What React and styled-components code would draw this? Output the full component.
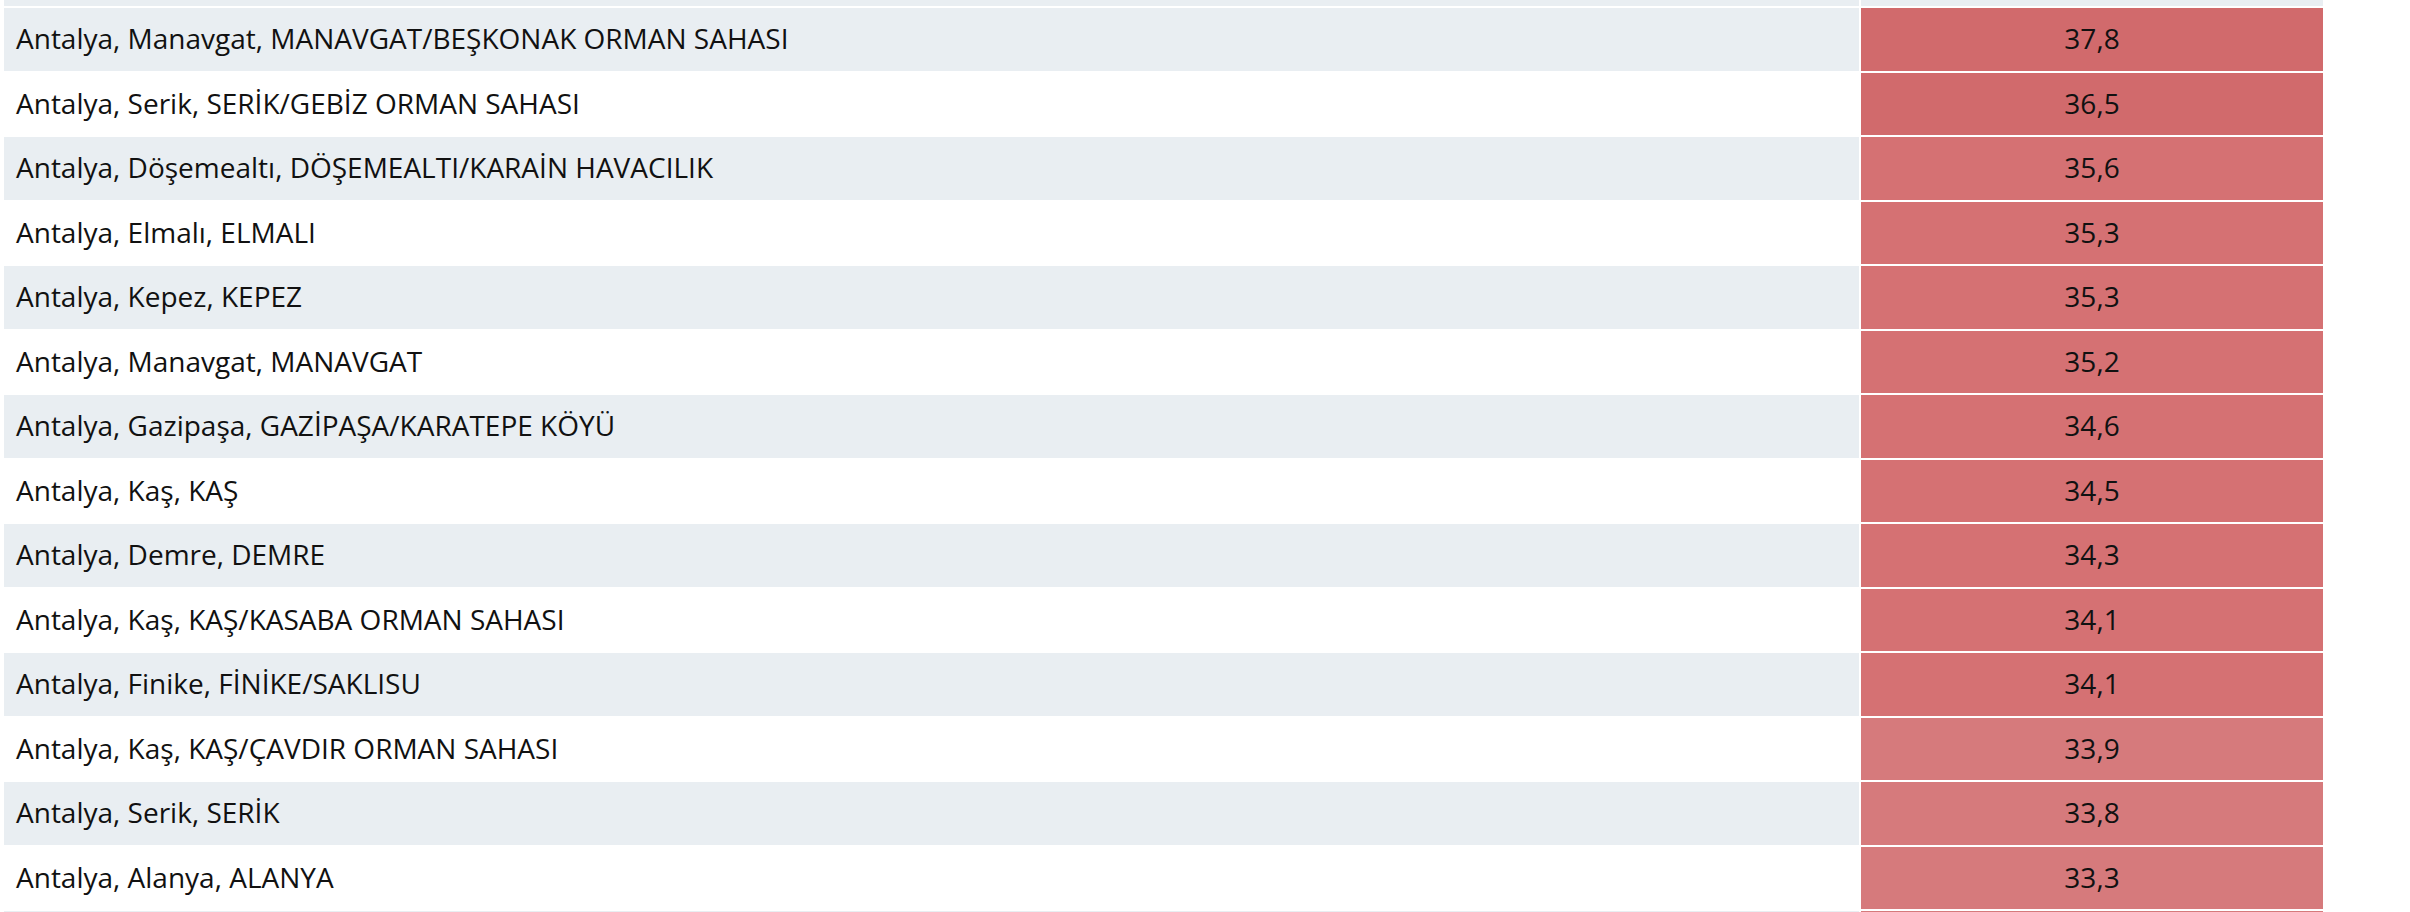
import React from "react";
import styled, { createGlobalStyle } from "styled-components";

const Global = createGlobalStyle`
  html, body { margin: 0; padding: 0; background: #ffffff; }
  body { font-family: "Open Sans", "Noto Sans", sans-serif; color: #111111; }
`;

const Table = styled.table`
  border-collapse: separate;
  border-spacing: 2px;
  margin: -2px 0 0 2px;
  table-layout: fixed;
  font-family: "Open Sans", "Noto Sans", sans-serif;
  font-size: 28px;
`;

const HeadCell = styled.td`
  height: 6px;
  padding: 0;
  background: #e9eef2;
`;

const NameCell = styled.td`
  width: 1855px;
  height: 62.5px;
  padding: 0 0 0 12px;
  box-sizing: border-box;
  background: ${(p) => (p.$striped ? "#e9eef2" : "#ffffff")};
  vertical-align: middle;
  white-space: nowrap;
  line-height: 1.2;
`;

const ValueCell = styled.td`
  width: 462px;
  padding: 0;
  box-sizing: border-box;
  background: ${(p) => p.$bg};
  text-align: center;
  vertical-align: middle;
  line-height: 1.2;
`;

const rows = [
  ["Antalya, Manavgat, MANAVGAT/BEŞKONAK ORMAN SAHASI", "37,8"],
  ["Antalya, Serik, SERİK/GEBİZ ORMAN SAHASI", "36,5"],
  ["Antalya, Döşemealtı, DÖŞEMEALTI/KARAİN HAVACILIK", "35,6"],
  ["Antalya, Elmalı, ELMALI", "35,3"],
  ["Antalya, Kepez, KEPEZ", "35,3"],
  ["Antalya, Manavgat, MANAVGAT", "35,2"],
  ["Antalya, Gazipaşa, GAZİPAŞA/KARATEPE KÖYÜ", "34,6"],
  ["Antalya, Kaş, KAŞ", "34,5"],
  ["Antalya, Demre, DEMRE", "34,3"],
  ["Antalya, Kaş, KAŞ/KASABA ORMAN SAHASI", "34,1"],
  ["Antalya, Finike, FİNİKE/SAKLISU", "34,1"],
  ["Antalya, Kaş, KAŞ/ÇAVDIR ORMAN SAHASI", "33,9"],
  ["Antalya, Serik, SERİK", "33,8"],
  ["Antalya, Alanya, ALANYA", "33,3"],
  ["Antalya, Akseki, AKSEKİ", "33,1"],
];

function colorFor(v) {
  if (v >= 36) return "#d16a6c";
  if (v >= 34) return "#d57173";
  return "#d67a7c";
}

export default function App() {
  return (
    <>
      <Global />
      <Table>
        <tbody>
          <tr>
            <HeadCell />
            <HeadCell />
          </tr>
          {rows.map(([name, val], i) => (
            <tr key={name}>
              <NameCell $striped={i % 2 === 0}>{name}</NameCell>
              <ValueCell $bg={colorFor(parseFloat(val.replace(",", ".")))}>{val}</ValueCell>
            </tr>
          ))}
        </tbody>
      </Table>
    </>
  );
}
